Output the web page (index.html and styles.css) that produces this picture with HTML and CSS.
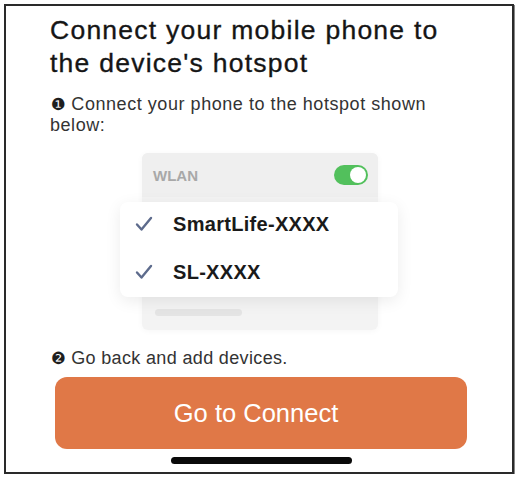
FILE: index.html
```html
<!DOCTYPE html>
<html>
<head>
<meta charset="utf-8">
<link rel="stylesheet" href="styles.css">
</head>
<body>
<div class="frame">
  <h1 class="title">Connect your mobile phone to the device's hotspot</h1>
  <p class="step step1"><span class="num">❶</span> <span>Connect your phone to the hotspot shown</span><br><span>below:</span></p>
  <div class="illus">
    <div class="back-card">
      <div class="wlan-row">
        <span class="wlan">WLAN</span>
        <span class="toggle"><span class="knob"></span></span>
      </div>
      <div class="back-body">
        <span class="placeholder"></span>
      </div>
    </div>
    <div class="front-card">
      <div class="net"><svg class="check" viewBox="0 0 18 16" width="18" height="16"><path d="M2 8.5 L6.5 13.5 L16 2" fill="none" stroke="#5d6b8c" stroke-width="2.4" stroke-linecap="round" stroke-linejoin="round"/></svg><span>SmartLife-XXXX</span></div>
      <div class="net"><svg class="check" viewBox="0 0 18 16" width="18" height="16"><path d="M2 8.5 L6.5 13.5 L16 2" fill="none" stroke="#5d6b8c" stroke-width="2.4" stroke-linecap="round" stroke-linejoin="round"/></svg><span>SL-XXXX</span></div>
    </div>
  </div>
  <p class="step step2"><span class="num">❷</span> <span>Go back and add devices.</span></p>
  <button class="btn">Go to Connect</button>
  <div class="home"></div>
</div>
</body>
</html>
```
FILE: styles.css
```css
* { box-sizing: border-box; }
html, body { margin: 0; padding: 0; background: #fff; }
body { font-family: "Liberation Sans", Arial, sans-serif; color: #1c1c1e; }
.frame {
  position: relative;
  margin: 4px 0 0 4px;
  width: 510px;
  height: 470px;
  border: 2px solid #2a2a2a;
  box-shadow: 1px 1px 0 #888;
  padding: 8px 0 0 44px;
}
.title {
  margin: 0;
  font-size: 26.5px;
  line-height: 33px;
  font-weight: 400;
  width: 420px;
  letter-spacing: 1.25px;
  color: #151515;
  -webkit-text-stroke: 0.35px #151515;
}
.step {
  margin: 14px 0 0;
  font-size: 18px;
  line-height: 21px;
  color: #333;
  width: 420px;
  letter-spacing: 0.55px;
}
.num {
  font-family: "DejaVu Sans", sans-serif;
  font-size: 16.5px;
  letter-spacing: 0;
  color: #1e1e1e;
  margin-left: 1px;
}
.illus {
  position: relative;
  height: 177px;
  margin-top: 17px;
}
.back-card {
  position: absolute;
  left: 92px;
  top: 0;
  width: 236px;
  height: 177px;
  background: #f3f3f3;
  border-radius: 6px;
  box-shadow: 0 1px 6px rgba(0,0,0,0.04);
}
.wlan-row {
  height: 44px;
  display: flex;
  align-items: center;
  justify-content: space-between;
  padding: 0 10px 0 11px;
  background: #efefef;
  border-radius: 6px 6px 0 0;
}
.wlan { color: #a8a8a8; font-size: 15px; font-weight: 700; }
.toggle {
  width: 34px;
  height: 20px;
  border-radius: 10px;
  background: #52c05c;
  position: relative;
}
.knob {
  position: absolute;
  right: 2px;
  top: 2px;
  width: 16px;
  height: 16px;
  border-radius: 50%;
  background: #fff;
}
.back-body { padding: 112px 0 0 13px; }
.placeholder {
  display: block;
  width: 87px;
  height: 7px;
  border-radius: 4px;
  background: #e4e4e4;
}
.front-card {
  position: absolute;
  left: 70px;
  top: 49px;
  width: 278px;
  height: 95px;
  background: #fff;
  border-radius: 8px;
  box-shadow: 0 4px 16px rgba(0,0,0,0.08);
  padding: 10px 0 0 15px;
  display: flex;
  flex-direction: column;
  gap: 24px;
}
.net {
  display: flex;
  align-items: center;
  height: 24px;
  font-size: 20px;
  font-weight: 700;
  color: #1a1a1a;
  letter-spacing: 0.3px;
}
.check { margin-right: 20px; }
.step2 { margin-top: 17px; line-height: 22px; letter-spacing: 0.35px; }
.btn {
  display: block;
  margin: 7px 0 0 5px;
  width: 412px;
  height: 72px;
  border: none;
  border-radius: 12px;
  background: #e07847;
  color: #fff;
  font-family: "Liberation Sans", Arial, sans-serif;
  font-size: 25.5px;
  padding: 0 10px 0 0;
}
.home {
  width: 181px;
  height: 7px;
  border-radius: 4px;
  background: #0a0a0a;
  margin: 8px 0 0 121px;
}
```
